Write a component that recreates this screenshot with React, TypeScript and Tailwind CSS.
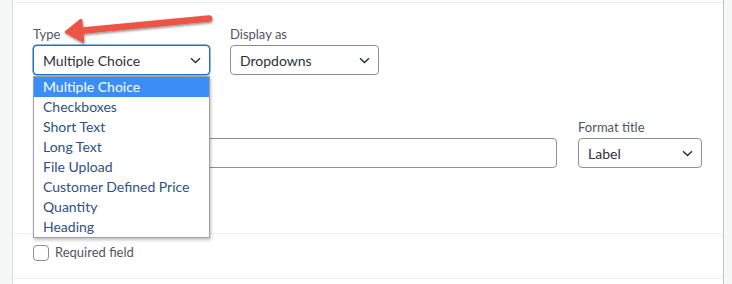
import React from "react";

const Chevron = () => (
  <svg width="11" height="7" viewBox="0 0 11 7" className="shrink-0">
    <path d="M1 1.2 L5.5 5.5 L10 1.2" fill="none" stroke="#2c3338" strokeWidth="1.5" />
  </svg>
);

function Select({ value, width, focused }: { value: string; width: string; focused?: boolean }) {
  return (
    <div
      className={`${width} h-[30px] flex items-center justify-between pl-[9px] pr-[8px] rounded-[4px] bg-white text-[14px] text-[#2c3338] ${
        focused ? "border border-[#2271b1] shadow-[0_0_0_0.5px_#2271b1]" : "border border-[#8c8f94]"
      }`}
    >
      <span>{value}</span>
      <Chevron />
    </div>
  );
}

const items = [
  "Multiple Choice",
  "Checkboxes",
  "Short Text",
  "Long Text",
  "File Upload",
  "Customer Defined Price",
  "Quantity",
  "Heading",
];

export default function App() {
  return (
    <div
      className="relative w-[732px] h-[284px] overflow-hidden flex bg-[#f6f7f7]"
      style={{ fontFamily: "Lato, 'Open Sans', sans-serif" }}
    >
      <div className="w-[12px] shrink-0 bg-[#f6f7f7]" />
      <div className="w-[712px] shrink-0 bg-white border-l border-r border-l-[#dcdcde] border-r-[#c3c4c7] flex flex-col">
        <div className="h-[2px]" />
        <div className="border-t border-[#f0f0f1] pl-[20px] pt-[21px] pb-[17px]">
          <div className="flex gap-[20px]">
            <div className="flex flex-col">
              <div className="h-[20px] leading-[20px] text-[13px] text-[#50575e]">Type</div>
              <div className="mt-[1px]">
                <Select value="Multiple Choice" width="w-[177px]" focused />
              </div>
            </div>
            <div className="flex flex-col">
              <div className="h-[20px] leading-[20px] text-[13px] text-[#50575e]">Display as</div>
              <div className="mt-[1px]">
                <Select value="Dropdowns" width="w-[149px]" />
              </div>
            </div>
          </div>
          <div className="flex gap-[21px] mt-[42px]">
            <div className="flex flex-col">
              <div className="h-[20px]" />
              <div className="mt-[1px] w-[524px] h-[30px] rounded-[4px] border border-[#8c8f94] bg-white" />
            </div>
            <div className="flex flex-col">
              <div className="h-[20px] leading-[20px] text-[13px] text-[#50575e]">Format title</div>
              <div className="mt-[1px]">
                <Select value="Label" width="w-[124px]" />
              </div>
            </div>
          </div>
          <div className="flex items-center gap-[6px] mt-[32px] h-[16px]">
            <div className="w-[16px] h-[16px] rounded-[4px] border border-[#8c8f94] bg-white" />
          </div>
        </div>
        <div className="border-t border-[#f0f0f1] pl-[20px] pt-[11px] pb-[17px]">
          <div className="flex items-center gap-[6px] h-[16px]">
            <div className="w-[16px] h-[16px] rounded-[4px] border border-[#8c8f94] bg-white" />
            <span className="text-[13px] text-[#50575e]">Required field</span>
          </div>
        </div>
        <div className="border-t border-[#f0f0f1] flex-1" />
      </div>
      <div className="flex-1 bg-[#f6f7f7]" />

      {/* open dropdown list */}
      <div className="absolute left-[33px] top-[76px] w-[177px] border border-[#a0a0a0] bg-white shadow-[1px_2px_3px_rgba(0,0,0,0.25)] flex flex-col">
        {items.map((it, i) => (
          <div
            key={it}
            className={`h-[20px] leading-[20px] pl-[9px] text-[14px] ${
              i === 0 ? "bg-[#3a8ef6] text-white" : "text-[#2f5180]"
            }`}
          >
            {it}
          </div>
        ))}
      </div>

      {/* annotation arrow */}
      <svg className="absolute left-0 top-0" width="732" height="284" viewBox="0 0 732 284">
        <defs>
          <filter id="sh" x="-20%" y="-50%" width="140%" height="200%">
            <feDropShadow dx="0.5" dy="1.5" stdDeviation="1" floodColor="#000" floodOpacity="0.45" />
          </filter>
        </defs>
        <g filter="url(#sh)" fill="#ec5444" stroke="#ec5444" strokeLinejoin="round">
          <line x1="78" y1="31" x2="209" y2="18.5" strokeWidth="6.5" strokeLinecap="round" />
          <polygon points="66,32 81,20 83,41.5" strokeWidth="2.5" />
        </g>
      </svg>
    </div>
  );
}
